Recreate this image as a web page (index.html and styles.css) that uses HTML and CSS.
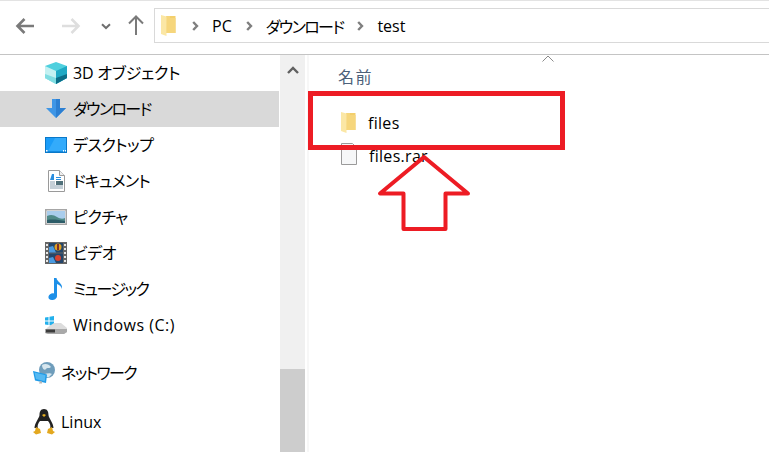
FILE: index.html
```html
<!DOCTYPE html>
<html lang="ja">
<head>
<meta charset="utf-8">
<title>test</title>
<link rel="stylesheet" href="styles.css">
</head>
<body>
<div class="window">
  <header class="toolbar">
    <div class="nav">
      <svg class="nav-back" width="20" height="18" viewBox="0 0 20 18"><path d="M19 9H3M9.5 2 2.5 9l7 7" fill="none" stroke="#7a7a7a" stroke-width="2.6"/></svg>
      <svg class="nav-forward" width="20" height="18" viewBox="0 0 20 18"><path d="M1 9h16M10.5 2l7 7-7 7" fill="none" stroke="#dedede" stroke-width="2.6"/></svg>
      <svg class="nav-recent" width="10" height="7" viewBox="0 0 10 7"><path d="M1 1.2 5 5l4-3.800" fill="none" stroke="#6f6f6f" stroke-width="2"/></svg>
      <svg class="nav-up" width="16" height="20" viewBox="0 0 16 20"><path d="M8 20V2M1 8.500 8 1.500l7 7" fill="none" stroke="#7a7a7a" stroke-width="2"/></svg>
    </div>
    <div class="address">
      <svg class="addr-folder" width="15" height="22" viewBox="0 0 15 22"><path d="M5 1h9.500v17H5z" fill="#f3cf6c"/><path d="M5 1 9 1 9 3h5.500v15H6z" fill="#f6d67c"/><path d="M0 0l5.500 1.500V21L0 19z" fill="#fbe7a5"/></svg>
      <svg class="crumb-sep" width="7" height="10" viewBox="0 0 7 10"><path d="M1.200 1 5 5 1.200 9" fill="none" stroke="#7f7f7f" stroke-width="2.400"/></svg>
      <span class="crumb">PC</span>
      <svg class="crumb-sep" width="7" height="10" viewBox="0 0 7 10"><path d="M1.200 1 5 5 1.200 9" fill="none" stroke="#7f7f7f" stroke-width="2.400"/></svg>
      <span class="crumb tight-lg">ダウンロード</span>
      <svg class="crumb-sep" width="7" height="10" viewBox="0 0 7 10"><path d="M1.200 1 5 5 1.200 9" fill="none" stroke="#7f7f7f" stroke-width="2.400"/></svg>
      <span class="crumb">test</span>
    </div>
  </header>

  <div class="body">
    <nav class="sidebar">
      <ul class="tree">
        <li class="row sub">
          <svg class="icon" width="22" height="22" viewBox="0 0 22 22"><path d="M11 0 22 4v12l-11 6L0 16V4z" fill="#4fd0de"/><path d="M0 4l11 5v13L0 16z" fill="#c3f1f2"/><path d="M11 9l11-5v12l-11 6z" fill="#1fa9c4"/><path d="M0 12l11 4v6L0 16z" fill="#7fdde2"/><path d="M11 16l11-4v4l-11 6z" fill="#0b6d87"/></svg>
          <span class="label tight-xs">3D オブジェクト</span>
        </li>
        <li class="row sub selected">
          <svg class="icon" width="22" height="22" viewBox="0 0 22 22"><path d="M7 1h8v9h6L11 20 1 10h6z" fill="#3f96e6"/><path d="M11 1h4v9h6L11 20z" fill="#2c7fd2"/></svg>
          <span class="label tight-lg">ダウンロード</span>
        </li>
        <li class="row sub">
          <svg class="icon" width="22" height="22" viewBox="0 0 22 16"><rect width="22" height="16" fill="#0a78c8"/><rect x="1" y="1" width="20" height="13.500" fill="#1a9cf8"/><path d="M10 1h11v13H3z" fill="#33abfb"/><path d="M1 13h1.500v1.500H1zM18 13h1v1.500h-1zM20 13h1v1.500h-1z" fill="#fff"/></svg>
          <span class="label tight-sm">デスクトップ</span>
        </li>
        <li class="row sub">
          <svg class="icon" width="22" height="22" viewBox="0 0 22 22"><path d="M3.500 0.500h11l5 5v16h-16z" fill="#fff" stroke="#9a9a9a"/><path d="M14.500.5v5h5" fill="#eee" stroke="#9a9a9a"/><path d="M5 12h5M5 14h5M5 16h13M5 18h13" stroke="#8aa0b0"/><path d="M7 4h2v6H5zM11 7h5v1h-5zM11 9h5v1h-5z" fill="#2b8fe0"/><rect x="11" y="11" width="7" height="4" fill="#50707a"/></svg>
          <span class="label tight-md">ドキュメント</span>
        </li>
        <li class="row sub">
          <svg class="icon" width="22" height="22" viewBox="0 0 22 16"><rect x=".75" y=".75" width="20.500" height="14.500" fill="#fff" stroke="#a6a6a6" stroke-width="1.500"/><rect x="2" y="2" width="18" height="12" fill="#a9cdec"/><path d="M2 7c4-2 7-1 10 1s6 2 8 1v5H2z" fill="#4f8a88"/><path d="M2 11c6-1 12 0 18 1v2H2z" fill="#2c5c68"/></svg>
          <span class="label tight-sm">ピクチャ</span>
        </li>
        <li class="row sub">
          <svg class="icon" width="22" height="22" viewBox="0 0 22 22"><rect width="22" height="22" fill="#666"/><path d="M1 2h2v2H1zM1 6h2v2H1zM1 10h2v2H1zM1 14h2v2H1zM1 18h2v2H1zM19 2h2v2h-2zM19 6h2v2h-2zM19 10h2v2h-2zM19 14h2v2h-2zM19 18h2v2h-2z" fill="#e8e8e8"/><rect x="4" y="1" width="14" height="9.500" fill="#24466a"/><rect x="4" y="11.500" width="14" height="9.500" fill="#24466a"/><path d="M4 5l4-1 3 6.500H4zM4 16l4-1 3 6H4z" fill="#4a9ae0"/><circle cx="13" cy="5" r="3.500" fill="#e0a020"/><circle cx="13" cy="16" r="3" fill="#d8432f"/><path d="M12 2h2v6h-2z" fill="#7a2f2f"/></svg>
          <span class="label tight-sm">ビデオ</span>
        </li>
        <li class="row sub">
          <svg class="icon" width="22" height="22" viewBox="0 0 22 22"><path d="M9 0h2.500c.5 4 6.500 5 5.500 11-.5-2.500-3-4.500-5-5v12c0 2.500-2.500 4-5 4s-4-1.500-3.500-3.500S7 14.500 9 15.500z" fill="#1e90e8"/></svg>
          <span class="label tight-lg">ミュージック</span>
        </li>
        <li class="row sub">
          <svg class="icon" width="22" height="22" viewBox="0 0 22 22"><path d="M0 3.500 3.500 3v3.500H0zM4.500 2.800 9 2v4.500H4.500zM0 7.500h3.500V11L0 10.500zM4.500 7.500H9V12l-4.500-.8z" fill="#22b0ec"/><path d="M3 13 9 9h7l6 5v4l-3 2H3l-3-1v-3z" fill="#dcdcdc"/><path d="M0 15h22v3l-3 2H3l-3-1z" fill="#a9a9a9"/><rect x="1" y="15.500" width="9" height="3" fill="#3c3c3c"/></svg>
          <span class="wide">Windows (C:)</span>
        </li>
      </ul>
      <ul class="tree top-level network">
        <li class="row">
          <svg class="icon" width="22" height="22" viewBox="0 0 22 22"><circle cx="14" cy="8" r="8" fill="#6f9dbb"/><path d="M9 3c3-2 7-1 9 2-2 2-4 0-5 2s-4 0-4-4zM12 12c2-1 6-1 7 0l-3 3c-2 1-4-1-4-3z" fill="#d6e6ee"/><path d="M0 9l14 3.500-1 8.500-11-2.500z" fill="#1f9be8"/><path d="M1.500 10.500l11 2.800-.8 6L3 17z" fill="#55b9f2"/><path d="M7 19l2 .5v2H6z" fill="#b8b8b8"/></svg>
          <span class="label tight-lg">ネットワーク</span>
        </li>
      </ul>
      <ul class="tree top-level linux">
        <li class="row">
          <svg class="icon" width="22" height="26" viewBox="0 0 22 26"><path d="M11 0c3.500 0 4.500 3 4.500 6 0 3 5 8 5 13H1.500c0-5 5-10 5-13 0-3 1-6 4.500-6z" fill="#222"/><path d="M7 12c2 0 6 0 8 0 2 2 3 5 2 8-2 3-10 3-12 0-1-3 0-6 2-8z" fill="#fff"/><path d="M9 6l2-1 2 1-2 2z" fill="#e8b020"/><path d="M3 18l4 2 1 4-5 1.500L0 23l2-1zM19 18l-4 2-1 4 5 1.500 3-2.500-2-1z" fill="#e3a81f"/></svg>
          <span>Linux</span>
        </li>
      </ul>
    </nav>

    <div class="scrollbar">
      <button class="scroll-up" type="button" aria-label="up">
        <svg width="12" height="8" viewBox="0 0 12 8"><path d="M1 7 6 2l5 5" fill="none" stroke="#606060" stroke-width="2.400"/></svg>
      </button>
      <div class="scroll-thumb"></div>
    </div>
    <div class="divider"></div>

    <main class="files">
      <div class="sort-caret"><svg width="12" height="7" viewBox="0 0 12 7"><path d="M.5 6.500 6 1l5.500 5.500" fill="none" stroke="#8a8a8a"/></svg></div>
      <div class="col-header">名前</div>
      <ul class="file-list">
        <li class="file">
          <svg class="file-icon" width="15" height="22" viewBox="0 0 15 22"><path d="M5 1h9.500v17H5z" fill="#f3cf6c"/><path d="M5 1 9 1 9 3h5.500v15H6z" fill="#f6d67c"/><path d="M0 0l5.500 1.500V21L0 19z" fill="#fbe7a5"/></svg>
          <span class="file-name">files</span>
        </li>
        <li class="file">
          <svg class="file-icon raised" width="16" height="22" viewBox="0 0 16 22"><path d="M.5.5h11l4 4v17H.5z" fill="#f6f7f8" stroke="#9a9a9a"/></svg>
          <span class="file-name">files.rar</span>
        </li>
      </ul>
    </main>
  </div>

  <svg class="annotation" width="769" height="452" viewBox="0 0 769 452">
    <rect x="310.500" y="93.500" width="252" height="54" fill="none" stroke="#ed1c24" stroke-width="5"/>
    <path d="M424 157 380 193.500h23.500V229h42V193.500H468z" fill="none" stroke="#ed1c24" stroke-width="4" stroke-linejoin="round"/>
  </svg>
</div>
</body>
</html>
```

FILE: styles.css
```css
* {
  box-sizing: border-box;
}

html,
body {
  margin: 0;
  padding: 0;
  background: #fff;
}

.window {
  position: relative;
  width: 769px;
  height: 452px;
  overflow: hidden;
  display: flex;
  flex-direction: column;
  font-family: "Open Sans", "Noto Sans CJK JP", sans-serif;
  font-size: 16px;
  font-feature-settings: "palt";
  color: #000;
}

.toolbar {
  flex: 0 0 55px;
  display: flex;
  align-items: flex-start;
  border-top: 1px solid #e3e3e3;
  border-bottom: 1px solid #c4c4c4;
}

.nav {
  width: 154px;
  height: 53px;
  padding-left: 15px;
  display: flex;
  align-items: center;
}

.nav-back {
  margin-top: -3px;
}

.nav-forward {
  margin: -3px 0 0 26px;
}

.nav-recent {
  margin: -3px 0 0 20px;
}

.nav-up {
  margin: -5px 0 0 17px;
}

.address {
  flex: 1;
  height: 35px;
  margin: 7px -4px 0 0;
  padding-left: 6px;
  display: flex;
  align-items: center;
  border: 1px solid #d9d9d9;
}

.crumb {
  white-space: nowrap;
}

.crumb-sep {
  margin: 0 13px 0 14px;
}

.addr-folder {
  margin-right: 2px;
}

.tight-xs {
  letter-spacing: -0.2px;
}

.tight-sm {
  letter-spacing: -0.5px;
}

.tight-md {
  letter-spacing: -0.8px;
}

.tight-lg {
  letter-spacing: -1.600px;
}

.wide {
  letter-spacing: 0.500px;
}

.body {
  flex: 1;
  min-height: 0;
  display: flex;
}

.sidebar {
  flex: 0 0 280px;
  overflow: hidden;
}

.tree {
  list-style: none;
  margin: 0;
  padding: 0;
}

.row {
  height: 36px;
  padding-right: 1px;
  display: flex;
  align-items: center;
  gap: 6px;
  padding-left: 33px;
  white-space: nowrap;
}

.row.sub {
  padding-left: 45px;
}

.row.selected {
  background: #d9d9d9;
  margin-right: 1px;
}

.label {
  padding-bottom: 2px;
}

.icon {
  flex: none;
}

.network {
  margin-top: 12px;
}

.linux {
  margin-top: 13px;
}

.scrollbar {
  flex: 0 0 25px;
  display: flex;
  flex-direction: column;
  background: #f0f0f0;
}

.scroll-up {
  height: 30px;
  padding: 0;
  border: 0;
  background: none;
  display: flex;
  align-items: center;
  justify-content: center;
}

.scroll-thumb {
  margin-top: 284px;
  flex: 1;
  background: #cdcdcd;
}

.divider {
  flex: 0 0 4px;
  border-left: 2px solid #fff;
  background: #f7f7f7;
}

.files {
  flex: 1;
  position: relative;
  padding: 10px 0 0 29px;
}

.sort-caret {
  position: absolute;
  left: 233px;
  top: 0;
  line-height: 0;
}

.col-header {
  height: 24px;
  line-height: 24px;
  color: #4c607a;
  letter-spacing: 1.500px;
}

.file-list {
  list-style: none;
  margin: 17px 0 0;
  padding: 0;
}

.file {
  height: 33px;
  display: flex;
  align-items: center;
  gap: 12px;
  padding-left: 3px;
}

.file-icon {
  flex: none;
}

.file-icon.raised {
  margin-bottom: 4px;
}

.file-name {
  letter-spacing: 0.300px;
}

.annotation {
  position: absolute;
  left: 0;
  top: 0;
  pointer-events: none;
}
```
